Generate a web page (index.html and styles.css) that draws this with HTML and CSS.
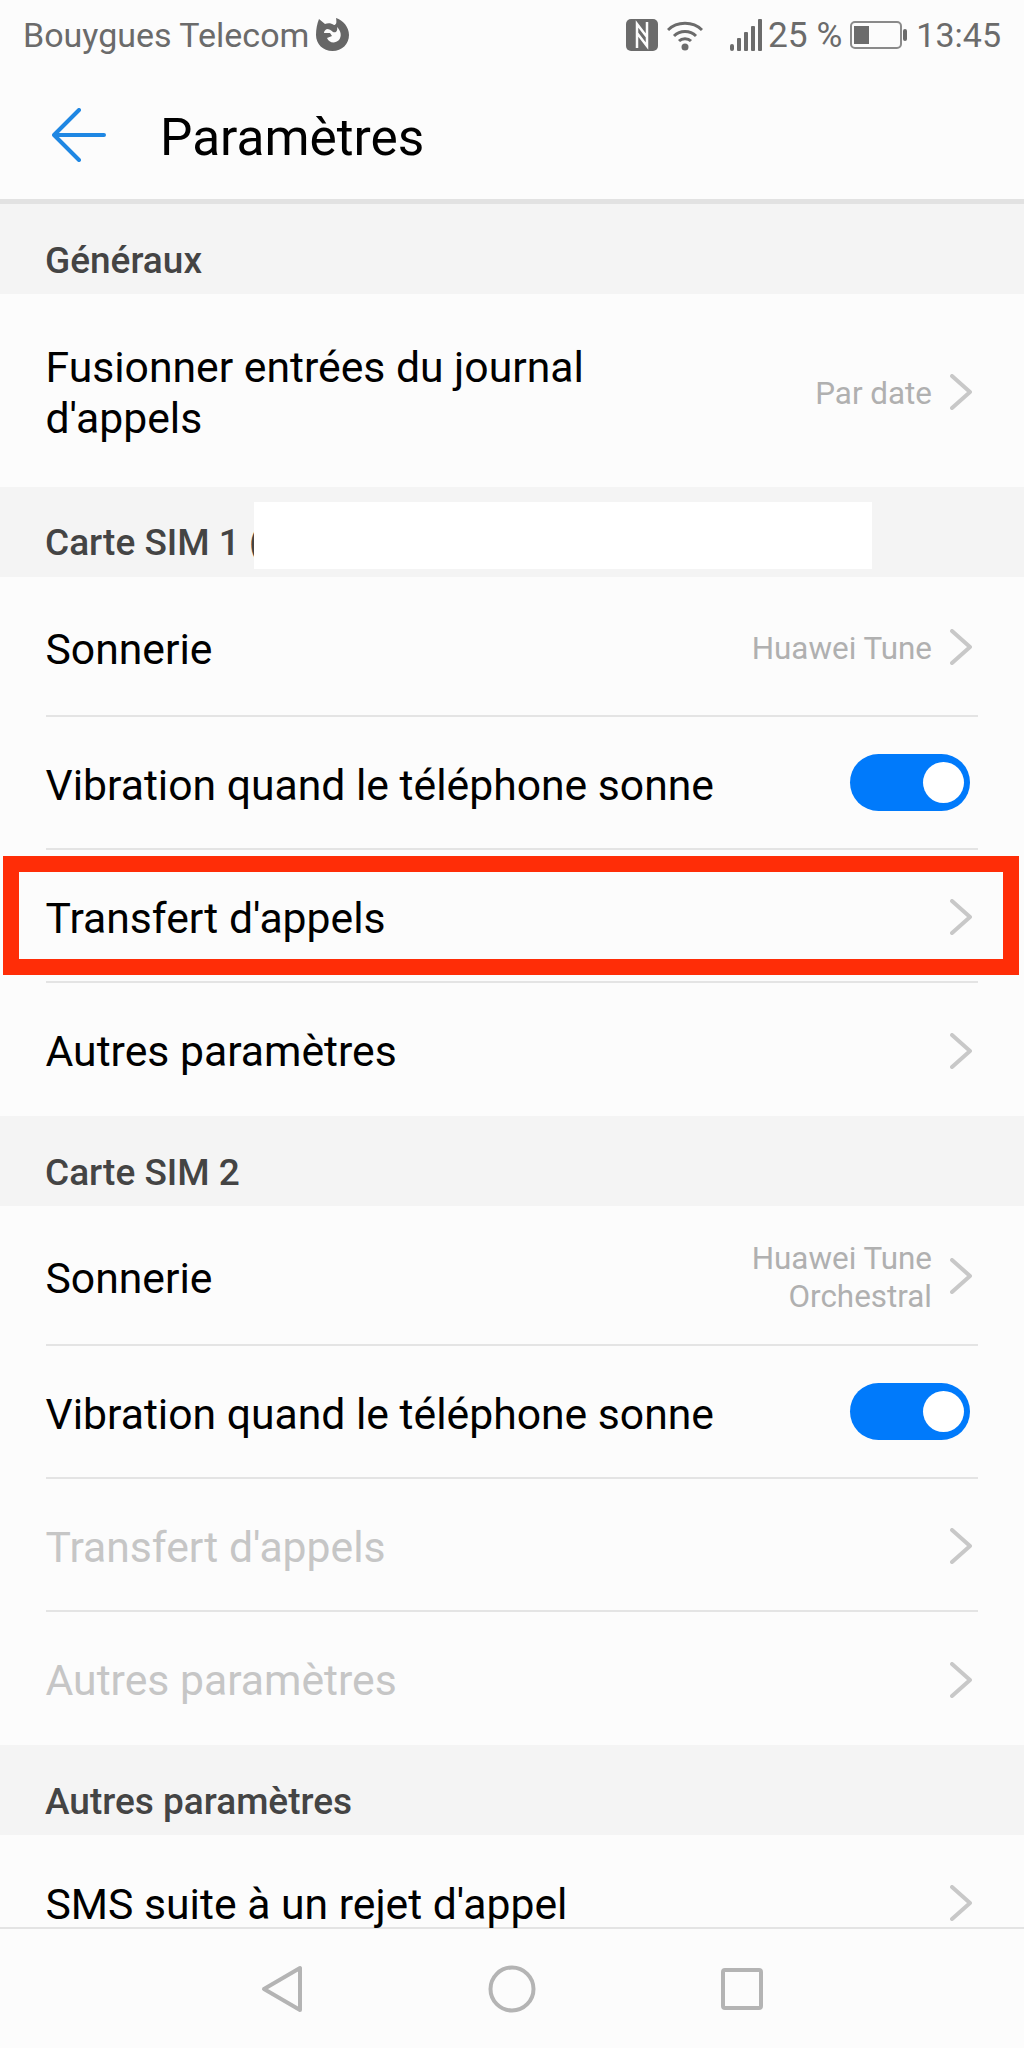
FILE: index.html
```html
<!DOCTYPE html>
<html>
<head>
  <title>Paramètres</title>
  <link rel="stylesheet" href="styles.css">
</head>
<body>
  <div class="phone">
    <div class="status-bar">
      <span class="carrier">Bouygues Telecom</span>
      <svg class="fox" width="33" height="33" viewBox="0 0 33 33">
        <path fill="#666666" fill-rule="evenodd" d="M3 1 L9 6 C12 5 15 5 18 7 C20 7 21 5 20 0 C27 2 33 9 33 17 C33 26 26 33 16.500 33 C7 33 0 26 0 17 C0 11 1 6 3 1 Z M11 11 C9 12 8 13 8 15 L14 15 L16 18 L11 20 C13 25 19 26 23 22 C26 18 25 13 21 9 C22 13 20 15 17 14 C15 12 13 11 11 11 Z"/>
      </svg>
      <div class="status-right">
        <svg class="nfc" width="32" height="32" viewBox="0 0 32 32">
          <rect x="0" y="0" width="32" height="32" rx="5" fill="#6b6b6b"/>
          <path d="M11 29 V5 L21 18 M21 3 V27 L11 14" fill="none" stroke="#fcfcfc" stroke-width="2.500"/>
        </svg>
        <svg class="wifi" width="36" height="31" viewBox="0 0 36 31">
          <path d="M1 10 C10 1 26 1 35 10 M7 16 C13 10 23 10 29 16 M12 21 C15 18 21 18 24 21" fill="none" stroke="#6b6b6b" stroke-width="3"/>
          <circle cx="18" cy="27" r="3.500" fill="#6b6b6b"/>
        </svg>
        <svg class="signal" width="33" height="32" viewBox="0 0 33 32">
          <rect x="0" y="25" width="4" height="7" rx="2" fill="#6b6b6b"/>
          <rect x="7" y="19" width="4" height="13" rx="1" fill="#6b6b6b"/>
          <rect x="14" y="13" width="4" height="19" rx="1" fill="#6b6b6b"/>
          <rect x="21" y="7" width="4" height="25" rx="1" fill="#6b6b6b"/>
          <rect x="28" y="0" width="4" height="32" rx="1" fill="#6b6b6b"/>
        </svg>
        <span class="battery-text">25 %</span>
        <svg class="battery" width="57" height="28" viewBox="0 0 57 28">
          <rect x="1" y="1" width="50" height="26" rx="4" fill="none" stroke="#8a8a8a" stroke-width="2"/>
          <rect x="4" y="5" width="15" height="18" fill="#6b6b6b"/>
          <rect x="53" y="8" width="4" height="12" rx="2" fill="#6b6b6b"/>
        </svg>
        <span class="clock">13:45</span>
      </div>
    </div>

    <div class="toolbar">
      <svg class="back" width="54" height="54" viewBox="0 0 54 54">
        <path d="M52 27 H3 M27 2 L2 27 L27 52" fill="none" stroke="#1f87e3" stroke-width="4" stroke-linecap="round" stroke-linejoin="round"/>
      </svg>
      <h1>Paramètres</h1>
    </div>

    <div class="content">
      <div class="section-title">Généraux</div>
      <div class="row row-tall">
        <div class="row-label">Fusionner entrées du journal<br>d'appels</div>
        <div class="row-value">Par date</div>
        <svg class="chevron" viewBox="0 0 22 36"><path d="M2 2 L20 18 L2 34"/></svg>
      </div>

      <div class="section-title sim-title">
        Carte SIM 1 (
        <div class="redacted"></div>
      </div>
      <div class="row row-ring">
        <div class="row-label">Sonnerie</div>
        <div class="row-value">Huawei Tune</div>
        <svg class="chevron" viewBox="0 0 22 36"><path d="M2 2 L20 18 L2 34"/></svg>
      </div>
      <div class="row">
        <div class="row-label">Vibration quand le téléphone sonne</div>
        <div class="switch"><div class="knob"></div></div>
      </div>
      <div class="row">
        <div class="row-label">Transfert d'appels</div>
        <svg class="chevron" viewBox="0 0 22 36"><path d="M2 2 L20 18 L2 34"/></svg>
        <div class="highlight"></div>
      </div>
      <div class="row row-last">
        <div class="row-label">Autres paramètres</div>
        <svg class="chevron" viewBox="0 0 22 36"><path d="M2 2 L20 18 L2 34"/></svg>
      </div>

      <div class="section-title">Carte SIM 2</div>
      <div class="row row-ring">
        <div class="row-label">Sonnerie</div>
        <div class="row-value">Huawei Tune<br>Orchestral</div>
        <svg class="chevron" viewBox="0 0 22 36"><path d="M2 2 L20 18 L2 34"/></svg>
      </div>
      <div class="row">
        <div class="row-label">Vibration quand le téléphone sonne</div>
        <div class="switch"><div class="knob"></div></div>
      </div>
      <div class="row disabled">
        <div class="row-label">Transfert d'appels</div>
        <svg class="chevron" viewBox="0 0 22 36"><path d="M2 2 L20 18 L2 34"/></svg>
      </div>
      <div class="row row-last disabled">
        <div class="row-label">Autres paramètres</div>
        <svg class="chevron" viewBox="0 0 22 36"><path d="M2 2 L20 18 L2 34"/></svg>
      </div>

      <div class="section-title">Autres paramètres</div>
      <div class="row row-last row-cut">
        <div class="row-label">SMS suite à un rejet d'appel</div>
        <svg class="chevron" viewBox="0 0 22 36"><path d="M2 2 L20 18 L2 34"/></svg>
      </div>
    </div>

    <div class="nav-bar">
      <svg width="42" height="48" viewBox="0 0 42 48">
        <path d="M39 3 V45 L3 24 Z" fill="none" stroke="#b4b4b4" stroke-width="4" stroke-linejoin="round"/>
      </svg>
      <svg width="48" height="48" viewBox="0 0 48 48">
        <circle cx="24" cy="24" r="21.500" fill="none" stroke="#b4b4b4" stroke-width="4"/>
      </svg>
      <svg width="42" height="42" viewBox="0 0 42 42">
        <rect x="2" y="2" width="38" height="38" rx="2" fill="none" stroke="#b4b4b4" stroke-width="4"/>
      </svg>
    </div>
  </div>
</body>
</html>
```
FILE: styles.css
```css
body {
  margin: 0;
  padding: 0;
  font-family: Roboto, "Liberation Sans", sans-serif;
  background-color: #fcfcfc;
}
.phone {
  width: 1024px;
  height: 2048px;
  display: flex;
  flex-direction: column;
}
.status-bar {
  height: 70px;
  display: flex;
  align-items: center;
  padding: 0 23px 0 23px;
  color: #6b6b6b;
  font-size: 34px;
  flex-shrink: 0;
}
.fox {
  margin-left: 7px;
  margin-bottom: 2px;
}
.status-right {
  margin-left: auto;
  display: flex;
  align-items: center;
}
.wifi {
  margin-left: 9px;
}
.signal {
  margin-left: 27px;
}
.battery-text {
  margin-left: 5px;
  font-size: 35.300px;
}
.battery {
  margin-left: 8px;
}
.clock {
  margin-left: 9px;
}
.toolbar {
  height: 129px;
  display: flex;
  align-items: center;
  padding-left: 52px;
  border-bottom: 5px solid #e2e2e2;
  flex-shrink: 0;
}
.back {
  margin-right: 54px;
}
h1 {
  margin: 0;
  font-size: 51.400px;
  font-weight: 400;
  color: #000000;
  margin-top: 6px;
}
.content {
  flex: 1;
}
.section-title {
  height: 90px;
  box-sizing: border-box;
  padding: 35px 45px 0;
  line-height: 44px;
  background-color: #f4f4f4;
  color: #444444;
  font-size: 37px;
  font-weight: 500;
  position: relative;
}
.sim-title {
  padding-top: 34px;
}
.redacted {
  position: absolute;
  left: 254px;
  top: 15px;
  width: 618px;
  height: 67px;
  background-color: #ffffff;
}
.row {
  height: 133px;
  margin: 0 46px;
  display: flex;
  align-items: center;
  border-bottom: 2px solid #e4e4e4;
  position: relative;
  box-sizing: border-box;
}
.row-ring {
  height: 140px;
}
.row-tall {
  height: 193px;
  border-bottom: none;
}
.row-last {
  border-bottom: none;
}
.row-cut {
  height: 92px;
  padding-top: 40px;
  align-items: flex-start;
}
.row-label {
  flex: 1;
  font-size: 42.700px;
  line-height: 51px;
  color: #000000;
  margin-top: 6px;
  margin-left: -0.500px;
}
.row-tall .row-label,
.row-last .row-label {
  margin-top: 4px;
}
.row-cut .row-label {
  margin-top: 6px;
  line-height: 46px;
}
.disabled .row-label {
  color: #c6c6c6;
}
.row-value {
  font-size: 31.400px;
  line-height: 38px;
  color: #b0b0b0;
  text-align: right;
  margin-right: 18px;
  margin-top: 6px;
}
.chevron {
  width: 22px;
  height: 36px;
  margin-right: 6px;
  margin-top: 2px;
  flex-shrink: 0;
}
.row-cut .chevron {
  margin-top: 10px;
}
.chevron path {
  fill: none;
  stroke: #c8c8c8;
  stroke-width: 4;
  stroke-linecap: round;
  stroke-linejoin: round;
}
.switch {
  width: 120px;
  height: 57px;
  border-radius: 29px;
  background-color: #007afb;
  display: flex;
  align-items: center;
  justify-content: flex-end;
  padding-right: 6px;
  box-sizing: border-box;
  margin-right: 8px;
}
.knob {
  width: 41px;
  height: 41px;
  border-radius: 50%;
  background-color: #ffffff;
}
.highlight {
  position: absolute;
  left: -43px;
  right: -41px;
  top: 6px;
  height: 119px;
  border: 16px solid #ff2d07;
  box-sizing: border-box;
}
.nav-bar {
  height: 121px;
  flex-shrink: 0;
  border-top: 2px solid #e4e4e4;
  box-sizing: border-box;
  display: flex;
  justify-content: center;
  align-items: center;
  gap: 185px;
}
```
